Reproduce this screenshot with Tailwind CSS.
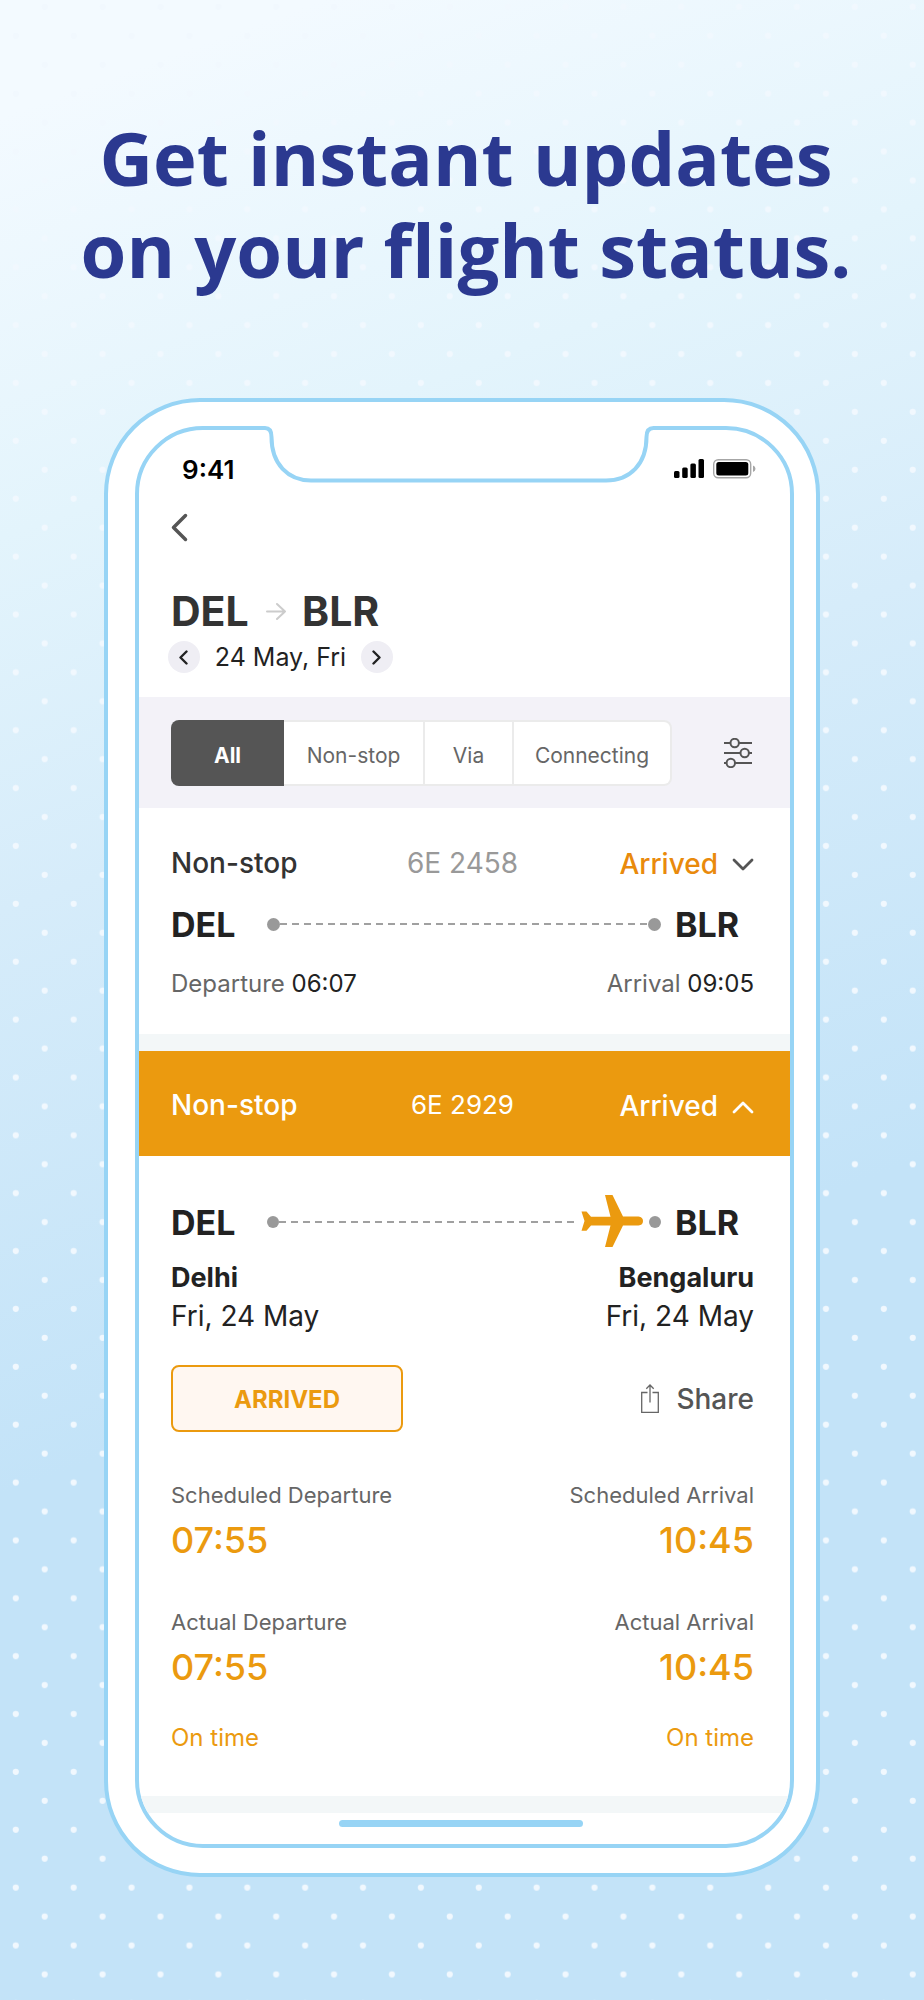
<!DOCTYPE html>
<html lang="en">
<head>
<meta charset="utf-8">
<meta name="viewport" content="width=device-width, initial-scale=1">
<title>Flight status</title>
<script src="https://cdn.jsdelivr.net/npm/@tailwindcss/browser@4"></script>
</head>
<body class="font-['Inter','Liberation_Sans',sans-serif] text-[#222]">
<div class="relative min-h-screen overflow-hidden bg-[linear-gradient(160deg,#f3faff_5%,#e3f4fc_23%,#d6ecfa_39%,#c3e3f8_64%)]">
  <!-- dotted backdrop -->
  <svg class="absolute inset-0 h-full w-full" aria-hidden="true">
    <defs>
      <pattern id="dots" width="57.87" height="57.87" patternUnits="userSpaceOnUse">
        <circle cx="15.8" cy="35.7" r="3.1" fill="#f1f8fe"/>
        <circle cx="44.7" cy="6.8" r="3.1" fill="#f1f8fe"/>
      </pattern>
    </defs>
    <rect width="100%" height="100%" fill="url(#dots)"/>
  </svg>

  <main class="relative px-[104px] pt-28 pb-[122px]">
    <h1 class="-mx-10 pl-2 text-center font-['Open_Sans','Noto_Sans',sans-serif] text-[74px] leading-[92px] font-bold text-[#2b3990]">Get instant updates<br>on your flight status.</h1>

    <div class="mt-[102px] rounded-[96px] border-4 border-[#97d4f5] bg-white pt-[24px] pr-[22px] pb-[25px] pl-[27px]">
      <div class="relative rounded-[68px] border-4 border-[#97d4f5] bg-white">
        <div class="overflow-hidden rounded-[64px]">
          <div class="flex h-[58px] items-center justify-between pt-5 pr-[34px] pl-[43px]">
            <span class="text-[26px] font-semibold text-black">9:41</span>
            <svg class="h-5 w-[82px]" viewBox="0 0 82 20" aria-label="Signal and battery full" role="img">
              <g fill="#000">
                <rect x="0" y="12" width="5.500" height="7" rx="1.500"/>
                <rect x="8.200" y="8.500" width="5.500" height="10.500" rx="1.500"/>
                <rect x="16.400" y="4.500" width="5.500" height="14.500" rx="1.500"/>
                <rect x="24.500" y="0" width="5.500" height="19" rx="1.500"/>
                <rect x="42.300" y="3" width="32" height="13.500" rx="2.500"/>
              </g>
              <rect x="39.700" y="0.700" width="37" height="18" rx="4.500" fill="none" stroke="#a6a6a6" stroke-width="1.400"/>
              <path d="M79 6.500Q81.500 7.500 81.500 9.700T79 13Z" fill="#a6a6a6"/>
            </svg>
          </div>

          <div class="flex h-20 items-center pl-8">
            <button class="flex h-10 w-5 items-center" aria-label="Back">
              <svg class="h-8 w-5" viewBox="0 0 20 32" fill="none" stroke="#555" stroke-width="3.500" stroke-linecap="round" stroke-linejoin="round"><path d="M14.500 3.500 2.500 15.500 14.500 27.500"/></svg>
            </button>
          </div>

          <div class="pt-[19px] pb-6 pl-8">
            <h2 class="flex items-center text-[41px] leading-[48px] font-bold text-[#333]">
              <span class="w-[95px]">DEL</span>
              <svg class="mr-4 h-5 w-5" viewBox="0 0 20 20" fill="none" stroke="#ccc" stroke-width="2" stroke-linecap="round" stroke-linejoin="round"><path d="M1 10.500H19M11 3 19 10.500 11 18"/></svg>
              <span>BLR</span>
            </h2>
            <div class="mt-[6px] -ml-[3px] flex items-center">
              <button class="flex h-8 w-8 items-center justify-center rounded-full bg-[#efeef4]" aria-label="Previous day">
                <svg class="h-4 w-4" viewBox="0 0 16 16" fill="none" stroke="#222" stroke-width="2.400" stroke-linecap="round" stroke-linejoin="round"><path d="M10.500 2.500 4.500 8.500 10.500 14.500"/></svg>
              </button>
              <span class="w-[161px] text-center text-[25px] leading-8">24 May, Fri</span>
              <button class="flex h-8 w-8 items-center justify-center rounded-full bg-[#efeef4]" aria-label="Next day">
                <svg class="h-4 w-4" viewBox="0 0 16 16" fill="none" stroke="#222" stroke-width="2.400" stroke-linecap="round" stroke-linejoin="round"><path d="M4.500 2.500 10.500 8.500 4.500 14.500"/></svg>
              </button>
            </div>
          </div>

          <div class="flex h-[111px] items-center justify-between bg-[#f3f2f8] pr-[38px] pl-8">
            <div class="flex h-[66px] text-[21px] text-[#666]">
              <button class="w-[113px] rounded-l-lg bg-[#555] pt-[6px] font-bold text-white">All</button>
              <button class="w-[141px] border-y-2 border-r-2 border-[#ebebeb] bg-white pt-[6px]">Non-stop</button>
              <button class="w-[89px] border-y-2 border-r-2 border-[#ebebeb] bg-white pt-[6px]">Via</button>
              <button class="w-[158px] rounded-r-lg border-y-2 border-r-2 border-[#ebebeb] bg-white pt-[6px]">Connecting</button>
            </div>
            <button aria-label="Filters">
              <svg class="h-[30px] w-7" viewBox="0 0 28 30" fill="none" stroke="#555" stroke-width="2"><path d="M0 5H6.500M15 5H28M0 15H16.500M25 15H28M0 25H2.500M11 25H28"/><circle cx="10.700" cy="5" r="4.200"/><circle cx="20.700" cy="15" r="4.200"/><circle cx="6.800" cy="25" r="4.200"/></svg>
            </button>
          </div>

          <section class="pt-[38px] pr-9 pb-[34px] pl-8">
            <button class="grid w-full grid-cols-3 items-center text-[28px] leading-8" aria-expanded="false">
              <span class="text-left font-medium text-[#333]">Non-stop</span>
              <span class="text-center text-[#999]">6E 2458</span>
              <span class="flex items-center justify-end gap-[14px] pt-[2px] font-medium text-[#e98a0c]">Arrived
                <svg class="h-4 w-[22px]" viewBox="0 0 22 16" fill="none" stroke="#555" stroke-width="2.800" stroke-linecap="round" stroke-linejoin="round"><path d="M2 4 11 13 20 4"/></svg>
              </span>
            </button>
            <div class="mt-6 flex h-10 items-center text-[34px] font-bold">
              <span class="w-24">DEL</span>
              <span class="h-[13px] w-[13px] rounded-full bg-[#999]"></span>
              <span class="h-[2px] flex-1 bg-[repeating-linear-gradient(90deg,#a0a0a0_0_7px,transparent_7px_12px)]"></span>
              <span class="h-[13px] w-[13px] rounded-full bg-[#999]"></span>
              <span class="w-[93px] pl-[14px]">BLR</span>
            </div>
            <div class="mt-6 flex justify-between text-2xl leading-8 text-[#222]">
              <p><span class="text-[#666]">Departure</span> 06:07</p>
              <p><span class="text-[#666]">Arrival</span> 09:05</p>
            </div>
          </section>

          <div class="h-[17px] bg-[#f3f7f8]"></div>

          <section>
            <button class="grid h-[105px] w-full grid-cols-3 items-center bg-[#eb9a0f] pt-[2px] pr-9 pl-8 text-[28px] leading-8 text-white" aria-expanded="true">
              <span class="text-left font-medium">Non-stop</span>
              <span class="text-center text-[26px]">6E 2929</span>
              <span class="flex items-center justify-end gap-[14px] pt-[2px] font-medium">Arrived
                <svg class="h-4 w-[22px]" viewBox="0 0 22 16" fill="none" stroke="#fff" stroke-width="2.800" stroke-linecap="round" stroke-linejoin="round"><path d="M2 14 11 5 20 14"/></svg>
              </span>
            </button>

            <div class="pt-[38px] pr-9 pl-8">
              <div class="flex h-14 items-center text-[34px] font-bold">
                <span class="w-24">DEL</span>
                <span class="h-3 w-3 rounded-full bg-[#999]"></span>
                <span class="h-[2px] flex-1 bg-[repeating-linear-gradient(90deg,#a0a0a0_0_7px,transparent_7px_12px)]"></span>
                <svg class="mr-[6px] ml-[2px] h-[54px] w-[62px]" viewBox="0 0 62 54" fill="#eb9a0f" role="img" aria-label="Plane near destination"><path d="M24 0H31.500L42 21.500H57.500Q62 22 62 26T57.500 30.500H42L31.500 52H24L29.500 30.500H10L5.500 35.800H0.500L3.500 26 0.500 16.500H5.500L10 21.700H29.500Z"/></svg>
                <span class="h-3 w-3 rounded-full bg-[#999]"></span>
                <span class="w-[93px] pl-[14px]">BLR</span>
              </div>
              <div class="mt-[9px] flex justify-between text-[28px] leading-[38px]">
                <div><p class="text-[27px] font-bold">Delhi</p><p>Fri, 24 May</p></div>
                <div class="text-right"><p class="text-[27px] font-bold">Bengaluru</p><p>Fri, 24 May</p></div>
              </div>

              <div class="mt-[30px] flex h-[67px] items-center justify-between">
                <button class="h-full w-[232px] rounded-lg border-2 border-[#eb9a0f] bg-[#fff7f1] pt-[2px] text-2xl font-bold text-[#eb9a0f]">ARRIVED</button>
                <button class="flex items-center gap-[17px] text-[28px] font-medium text-[#555]">
                  <svg class="h-[30px] w-[18px]" viewBox="0 0 18 30" fill="none" stroke="#666" stroke-width="1.300"><path d="M6.500 8.500H0.700V28.300H17.300V8.500H11.500M9 18.500V1M5.300 4.800 9 1 12.700 4.800"/></svg>
                  Share
                </button>
              </div>

              <div class="mt-[47px] flex justify-between text-[22px] leading-8 text-[#666]">
                <div><p>Scheduled Departure</p><p class="text-4xl leading-[58px] font-medium text-[#eb9a0f]">07:55</p></div>
                <div class="text-right"><p>Scheduled Arrival</p><p class="text-4xl leading-[58px] font-medium text-[#eb9a0f]">10:45</p></div>
              </div>
              <div class="mt-[37px] flex justify-between text-[22px] leading-8 text-[#666]">
                <div><p>Actual Departure</p><p class="text-4xl leading-[58px] font-medium text-[#eb9a0f]">07:55</p></div>
                <div class="text-right"><p>Actual Arrival</p><p class="text-4xl leading-[58px] font-medium text-[#eb9a0f]">10:45</p></div>
              </div>
              <div class="mt-[26px] mb-[42px] flex justify-between text-2xl leading-8 text-[#eb9a0f]">
                <p>On time</p><p>On time</p>
              </div>
            </div>
          </section>

          <div class="h-[17px] bg-[#f3f7f8]"></div>
          <div class="pt-[7px] pr-2 pb-[17px]">
            <div class="mx-auto h-[7px] w-[244px] rounded-full bg-[#97d4f5]"></div>
          </div>
        </div>

        <!-- notch -->
        <svg class="absolute -top-1 left-[120px] h-[60px] w-[400px]" viewBox="0 0 400 60" fill="none" aria-hidden="true">
          <path d="M6 0H398V4H394Q388 4 388 12C388 36 372 54 348 54H53C29 54 14 36 14 12Q14 4 6 4Z" fill="#fff"/>
          <path d="M4 2H6Q12.500 2 12.500 11C12.500 38 29 54.500 52 54.500H347C371 54.500 387.500 38 387.500 11Q387.500 2 394.500 2H398" stroke="#97d4f5" stroke-width="4"/>
        </svg>
      </div>
    </div>
  </main>
</div>
</body>
</html>
